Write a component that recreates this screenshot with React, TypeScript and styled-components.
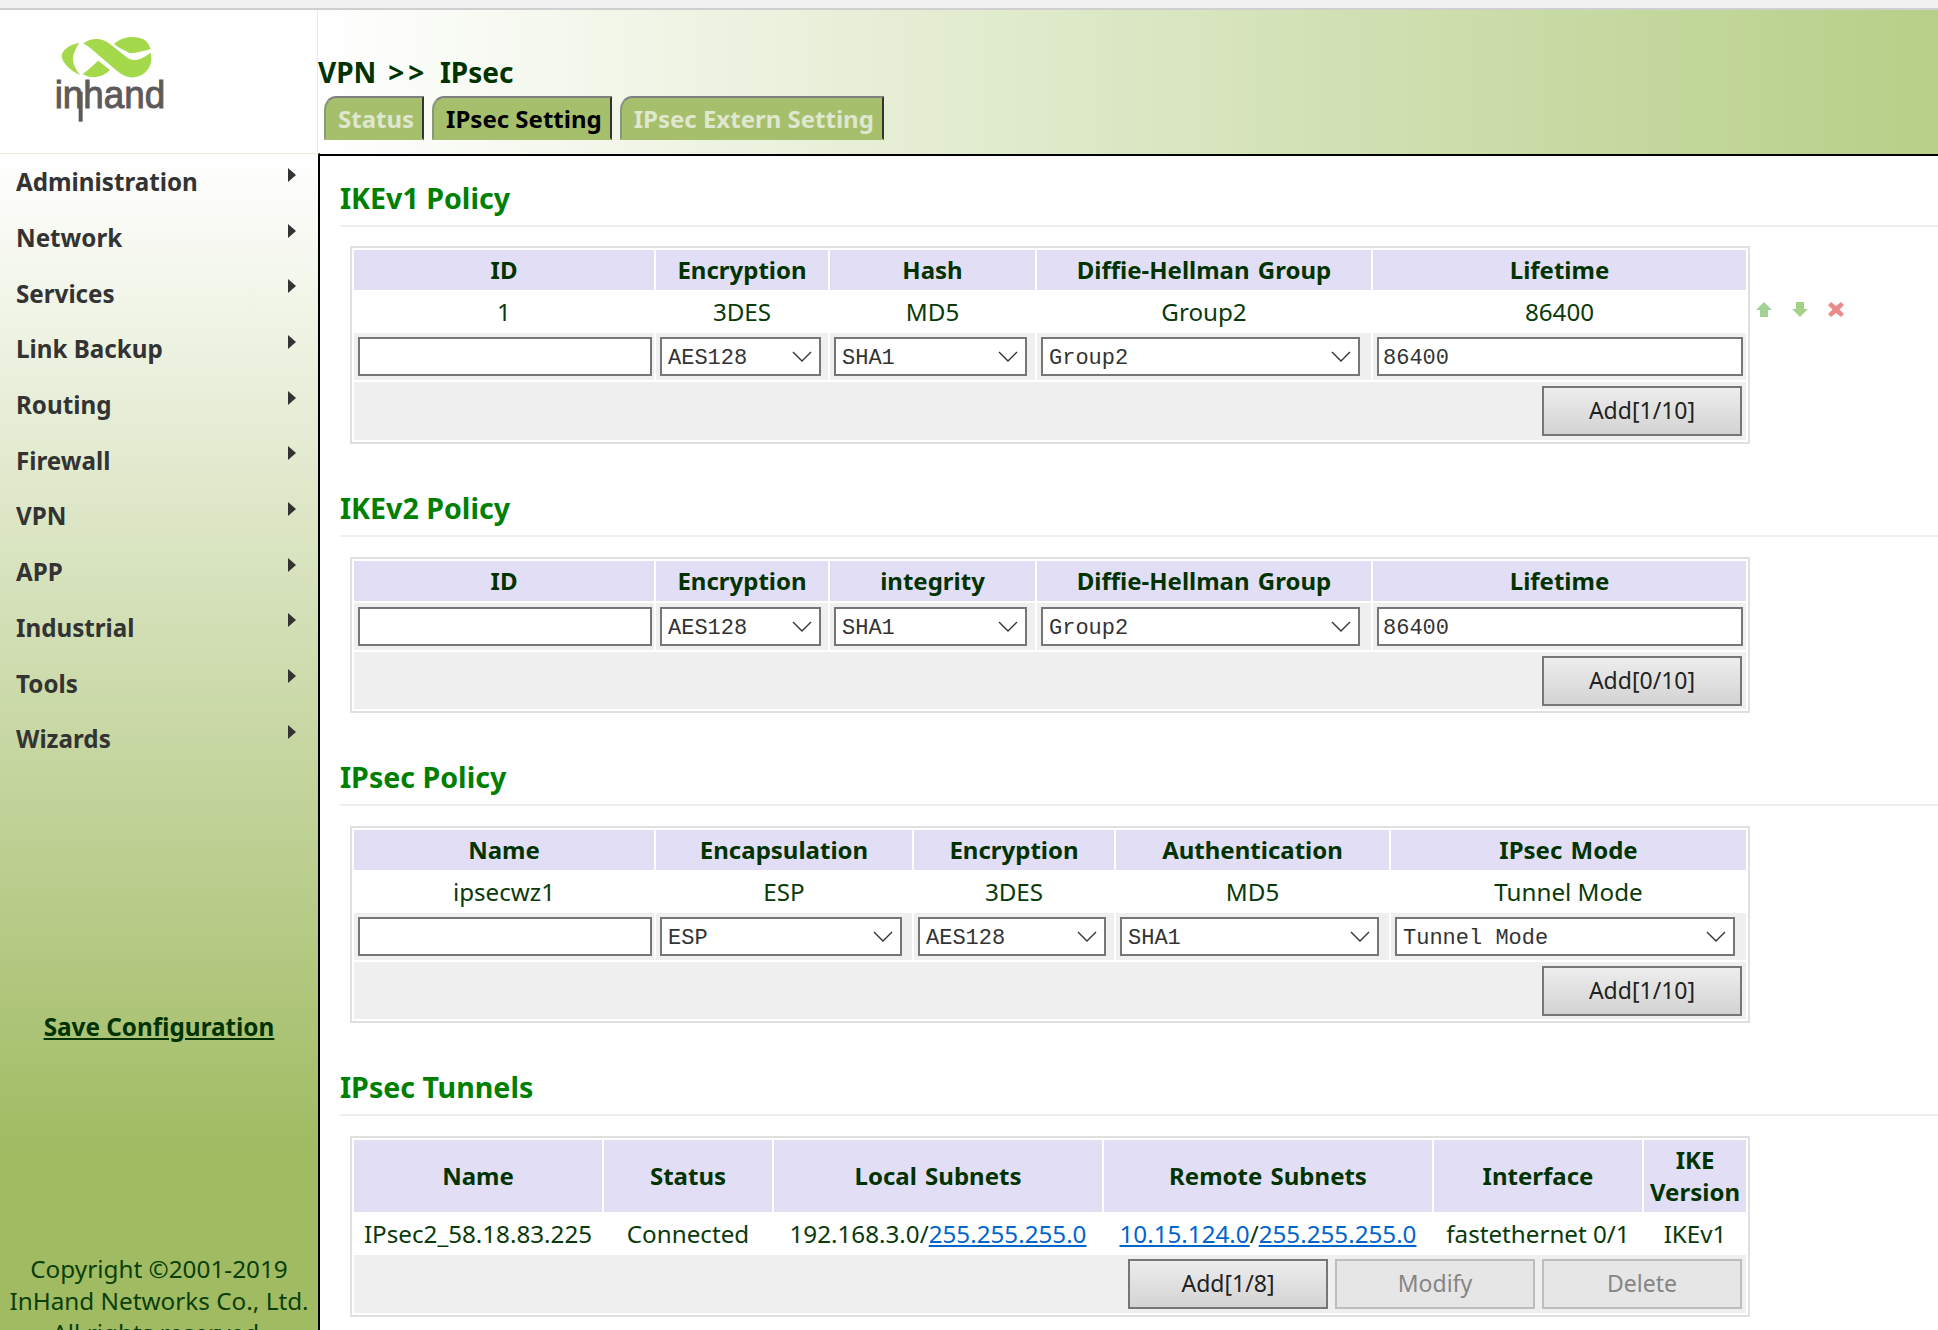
import styled, { createGlobalStyle } from "styled-components";

const GlobalStyle = createGlobalStyle`
    html, body {
        margin: 0;
        padding: 0;
        background: #fff;
        font-family: "Noto Sans", "Open Sans", sans-serif;
    }
`;

const menuItems = [
    "Administration",
    "Network",
    "Services",
    "Link Backup",
    "Routing",
    "Firewall",
    "VPN",
    "APP",
    "Industrial",
    "Tools",
    "Wizards",
];

function Logo() {
    return (
        <svg width="160" height="120" viewBox="0 0 480 360">
            <g fill="#a4d94c">
                <path d="M148 68C110 76 95 95 95 110C98 130 125 155 150 165C135 145 125 125 130 105C135 90 140 80 148 68Z" />
                <path d="M160 70C185 52 215 52 240 72L290 112C310 128 335 118 362 98C368 125 360 150 335 165C305 180 280 170 258 150L205 105C190 90 175 80 160 70Z" />
                <path d="M252 72C275 50 310 45 340 58C352 64 358 76 362 88C340 92 320 100 300 100C285 92 268 85 252 72Z" />
                <path d="M158 162C175 150 190 135 205 122L240 150C220 170 190 180 158 162Z" />
            </g>
            <LogoWord x="74" y="264" textLength="332" lengthAdjust="spacingAndGlyphs">
                inhand
            </LogoWord>
            <path d="M152 215V305" stroke="#5e5a5a" strokeWidth="12" fill="none" />
        </svg>
    );
}

function Chevron() {
    return (
        <ChevronIcon width="20" height="11" viewBox="0 0 20 11">
            <path d="M1 1L10 10L19 1" fill="none" stroke="#333" strokeWidth="1.4" />
        </ChevronIcon>
    );
}

function Picker({ value, width }: { value: string; width: number }) {
    return (
        <PickerWrap $width={width}>
            <PickerSelect defaultValue={value}>
                <option>{value}</option>
            </PickerSelect>
            <Chevron />
        </PickerWrap>
    );
}

function RowActions() {
    return (
        <Actions>
            <svg width="16" height="15" viewBox="0 0 16 15">
                <path d="M8 0L16 8H12V15H4V8H0Z" fill="#a3d196" />
            </svg>
            <svg width="16" height="15" viewBox="0 0 16 15">
                <path d="M8 15L16 7H12V0H4V7H0Z" fill="#a3d186" />
            </svg>
            <svg width="16" height="15" viewBox="0 0 16 15">
                <path d="M3 0L8 4L13 0L16 3L11.5 7.5L16 12L13 15L8 11L3 15L0 12L4.5 7.5L0 3Z" fill="#ec8a8c" />
            </svg>
        </Actions>
    );
}

function Columns({ widths }: { widths: number[] }) {
    return (
        <colgroup>
            {widths.map((w, i) => (
                <col key={i} style={{ width: w }} />
            ))}
        </colgroup>
    );
}

export default function App() {
    return (
        <Page>
            <GlobalStyle />
            <TopStrip />
            <Banner>
                <LogoCell>
                    <Logo />
                </LogoCell>
                <BannerMain>
                    <PageTitle>
                        VPN <Crumb>&gt;&gt;</Crumb> IPsec
                    </PageTitle>
                    <Tabs>
                        <Tab>Status</Tab>
                        <Tab $active>IPsec Setting</Tab>
                        <Tab>IPsec Extern Setting</Tab>
                    </Tabs>
                </BannerMain>
            </Banner>

            <Body>
                <Sidebar>
                    <nav>
                        {menuItems.map((item) => (
                            <MenuRow key={item}>
                                {item}
                                <MenuArrow />
                            </MenuRow>
                        ))}
                    </nav>
                    <SaveLink href="#">Save Configuration</SaveLink>
                    <Copyright>
                        Copyright ©2001-2019
                        <br />
                        InHand Networks Co., Ltd.
                        <br />
                        All rights reserved.
                    </Copyright>
                </Sidebar>

                <Content>
                    <SectionTitle>IKEv1 Policy</SectionTitle>
                    <TableRow>
                        <Table>
                            <Columns widths={[300, 172, 205, 334, 373]} />
                            <thead>
                                <tr>
                                    <HeadCell>ID</HeadCell>
                                    <HeadCell>Encryption</HeadCell>
                                    <HeadCell>Hash</HeadCell>
                                    <HeadCell>Diffie-Hellman Group</HeadCell>
                                    <HeadCell>Lifetime</HeadCell>
                                </tr>
                            </thead>
                            <tbody>
                                <tr>
                                    <Cell>1</Cell>
                                    <Cell>3DES</Cell>
                                    <Cell>MD5</Cell>
                                    <Cell>Group2</Cell>
                                    <Cell>86400</Cell>
                                </tr>
                                <tr>
                                    <InputCell><TextInput $width={294} /></InputCell>
                                    <InputCell><Picker value="AES128" width={161} /></InputCell>
                                    <InputCell><Picker value="SHA1" width={193} /></InputCell>
                                    <InputCell><Picker value="Group2" width={319} /></InputCell>
                                    <InputCell><TextInput $width={366} defaultValue="86400" /></InputCell>
                                </tr>
                                <tr>
                                    <FooterCell colSpan={5}>
                                        <ButtonBar>
                                            <ActionButton>Add[1/10]</ActionButton>
                                        </ButtonBar>
                                    </FooterCell>
                                </tr>
                            </tbody>
                        </Table>
                        <RowActions />
                    </TableRow>

                    <SectionTitle $spaced>IKEv2 Policy</SectionTitle>
                    <TableRow>
                        <Table>
                            <Columns widths={[300, 172, 205, 334, 373]} />
                            <thead>
                                <tr>
                                    <HeadCell>ID</HeadCell>
                                    <HeadCell>Encryption</HeadCell>
                                    <HeadCell>integrity</HeadCell>
                                    <HeadCell>Diffie-Hellman Group</HeadCell>
                                    <HeadCell>Lifetime</HeadCell>
                                </tr>
                            </thead>
                            <tbody>
                                <tr>
                                    <InputCell><TextInput $width={294} /></InputCell>
                                    <InputCell><Picker value="AES128" width={161} /></InputCell>
                                    <InputCell><Picker value="SHA1" width={193} /></InputCell>
                                    <InputCell><Picker value="Group2" width={319} /></InputCell>
                                    <InputCell><TextInput $width={366} defaultValue="86400" /></InputCell>
                                </tr>
                                <tr>
                                    <FooterCell colSpan={5} $short>
                                        <ButtonBar>
                                            <ActionButton>Add[0/10]</ActionButton>
                                        </ButtonBar>
                                    </FooterCell>
                                </tr>
                            </tbody>
                        </Table>
                    </TableRow>

                    <SectionTitle $spaced>IPsec Policy</SectionTitle>
                    <TableRow>
                        <Table>
                            <Columns widths={[300, 256, 200, 273, 355]} />
                            <thead>
                                <tr>
                                    <HeadCell>Name</HeadCell>
                                    <HeadCell>Encapsulation</HeadCell>
                                    <HeadCell>Encryption</HeadCell>
                                    <HeadCell>Authentication</HeadCell>
                                    <HeadCell>IPsec Mode</HeadCell>
                                </tr>
                            </thead>
                            <tbody>
                                <tr>
                                    <Cell>ipsecwz1</Cell>
                                    <Cell>ESP</Cell>
                                    <Cell>3DES</Cell>
                                    <Cell>MD5</Cell>
                                    <Cell>Tunnel Mode</Cell>
                                </tr>
                                <tr>
                                    <InputCell><TextInput $width={294} /></InputCell>
                                    <InputCell><Picker value="ESP" width={242} /></InputCell>
                                    <InputCell><Picker value="AES128" width={188} /></InputCell>
                                    <InputCell><Picker value="SHA1" width={259} /></InputCell>
                                    <InputCell><Picker value="Tunnel Mode" width={340} /></InputCell>
                                </tr>
                                <tr>
                                    <FooterCell colSpan={5} $short>
                                        <ButtonBar>
                                            <ActionButton>Add[1/10]</ActionButton>
                                        </ButtonBar>
                                    </FooterCell>
                                </tr>
                            </tbody>
                        </Table>
                    </TableRow>

                    <SectionTitle $spaced>IPsec Tunnels</SectionTitle>
                    <TableRow>
                        <Table>
                            <Columns widths={[248, 168, 328, 328, 208, 102]} />
                            <thead>
                                <tr>
                                    <HeadCell $tall>Name</HeadCell>
                                    <HeadCell $tall>Status</HeadCell>
                                    <HeadCell $tall>Local Subnets</HeadCell>
                                    <HeadCell $tall>Remote Subnets</HeadCell>
                                    <HeadCell $tall>Interface</HeadCell>
                                    <HeadCell $tall>IKE Version</HeadCell>
                                </tr>
                            </thead>
                            <tbody>
                                <tr>
                                    <Cell>IPsec2_58.18.83.225</Cell>
                                    <Cell>Connected</Cell>
                                    <Cell>
                                        192.168.3.0/<SubnetLink href="#">255.255.255.0</SubnetLink>
                                    </Cell>
                                    <Cell>
                                        <SubnetLink href="#">10.15.124.0</SubnetLink>/
                                        <SubnetLink href="#">255.255.255.0</SubnetLink>
                                    </Cell>
                                    <Cell>fastethernet 0/1</Cell>
                                    <Cell>IKEv1</Cell>
                                </tr>
                                <tr>
                                    <FooterCell colSpan={6}>
                                        <ButtonBar>
                                            <ActionButton>Add[1/8]</ActionButton>
                                            <ActionButton disabled>Modify</ActionButton>
                                            <ActionButton disabled>Delete</ActionButton>
                                        </ButtonBar>
                                    </FooterCell>
                                </tr>
                            </tbody>
                        </Table>
                    </TableRow>
                </Content>
            </Body>
        </Page>
    );
}

const Page = styled.div`
    width: 1938px;
    height: 1330px;
    overflow: hidden;
    display: flex;
    flex-direction: column;
    font-size: 24px;
    color: #0a3a0a;
`;

const TopStrip = styled.div`
    height: 8px;
    flex: none;
    background: #f1f1f1;
    border-bottom: 2px solid #cfcfcf;
`;

const Banner = styled.header`
    display: flex;
    height: 144px;
    flex: none;
`;

const LogoCell = styled.div`
    width: 318px;
    flex: none;
    box-sizing: border-box;
    padding: 10px 0 0 30px;
    background: #fff;
    border-right: 1px solid #e9eddc;
`;

const LogoWord = styled.text`
    font-family: "Liberation Sans", sans-serif;
    font-size: 118px;
    fill: #5e5a5a;
    stroke: #5e5a5a;
    stroke-width: 3px;
`;

const BannerMain = styled.div`
    flex: 1;
    padding-top: 45px;
    background: linear-gradient(90deg, #fff 0%, #b7cf88 100%);
`;

const PageTitle = styled.h1`
    margin: 0;
    font-size: 28px;
    line-height: 34px;
    font-weight: 700;
    word-spacing: 4.5px;
    color: #003300;
`;

const Crumb = styled.span`
    letter-spacing: 4px;
`;

const Tabs = styled.div`
    display: flex;
    gap: 8px;
    margin: 7px 0 0 6px;
`;

const Tab = styled.div<{ $active?: boolean }>`
    height: 44px;
    box-sizing: border-box;
    padding: 0 8px 0 12px;
    display: flex;
    align-items: center;
    background: #a6bf6c;
    border-style: solid;
    border-width: 2px;
    border-color: #808080 #333 #a6bf6c #8a9a78;
    border-top-left-radius: 12px 14px;
    font-size: 24px;
    font-weight: 700;
    color: ${(p) => (p.$active ? "#000" : "#dfe7cf")};
`;

const Body = styled.div`
    flex: 1;
    display: flex;
    min-height: 0;
`;

const Sidebar = styled.aside`
    width: 318px;
    flex: none;
    border-right: 2px solid #000;
    background: linear-gradient(180deg, #fff 0%, #a0bb62 85%, #a0bb62 100%);
    border-top: 1px solid #e9eddc;
    margin-top: -1px;
`;

const MenuRow = styled.div`
    height: 55.7px;
    box-sizing: border-box;
    padding: 0 22px 0 16px;
    display: flex;
    align-items: center;
    justify-content: space-between;
    font-size: 24.2px;
    font-weight: 700;
    color: #333;
`;

const MenuArrow = styled.span`
    width: 0;
    height: 0;
    margin-bottom: 14px;
    border-style: solid;
    border-width: 7px 0 7px 8px;
    border-color: transparent transparent transparent #333;
`;

const SaveLink = styled.a`
    display: block;
    margin-top: 243px;
    font-size: 24.3px;
    line-height: 34px;
    font-weight: 700;
    text-align: center;
    color: #003300;
    text-decoration: underline;
`;

const Copyright = styled.div`
    margin-top: 209px;
    font-size: 24.3px;
    line-height: 32px;
    text-align: center;
    color: #0a3f0a;
`;

const Content = styled.main`
    flex: 1;
    min-width: 0;
    box-sizing: border-box;
    padding: 24px 0 0 20px;
    border-top: 2px solid #000;
    background: #fff;
`;

const SectionTitle = styled.h2<{ $spaced?: boolean }>`
    margin: ${(p) => (p.$spaced ? "46px 0 20px" : "0 0 19px")};
    padding-bottom: 9px;
    font-size: 28.6px;
    line-height: 36px;
    font-weight: 700;
    color: #008000;
    border-bottom: 2px solid #eee;
`;

const TableRow = styled.div`
    display: flex;
    align-items: flex-start;
    margin-left: 10px;
`;

const Table = styled.table`
    width: 1400px;
    flex: none;
    box-sizing: border-box;
    table-layout: fixed;
    border: 2px solid #e0e0e0;
    border-collapse: separate;
    border-spacing: 2px;
`;

const HeadCell = styled.th<{ $tall?: boolean }>`
    height: ${(p) => (p.$tall ? "72px" : "40px")};
    padding: 0;
    background: #e2def5;
    font-size: 24px;
    line-height: 32px;
    font-weight: 700;
    word-spacing: 2px;
    text-align: center;
    color: #003300;
`;

const Cell = styled.td`
    height: 39px;
    padding: 0;
    font-size: 24.2px;
    text-align: center;
    white-space: nowrap;
    line-height: 32px;
`;

const InputCell = styled.td`
    height: 47px;
    padding: 0 0 0 4px;
    background: #efefef;
`;

const FooterCell = styled.td<{ $short?: boolean }>`
    height: ${(p) => (p.$short ? "57px" : "58px")};
    padding: 0 4px 0 0;
    background: #efefef;
`;

const ButtonBar = styled.div`
    display: flex;
    justify-content: flex-end;
    gap: 7px;
`;

const ActionButton = styled.button`
    width: 200px;
    height: 50px;
    box-sizing: border-box;
    padding: 0 0 2px;
    border: 2px solid #767676;
    border-radius: 0;
    background: linear-gradient(180deg, #ededed 0%, #d3d3d3 100%);
    font-family: inherit;
    font-size: 23px;
    color: #222;

    &:disabled {
        border-color: #bdbdbd;
        background: #e6e6e6;
        color: #858585;
    }
`;

const TextInput = styled.input<{ $width: number }>`
    display: block;
    width: ${(p) => p.$width}px;
    height: 39px;
    box-sizing: border-box;
    padding: 3px 4px 0;
    border: 2px solid #767676;
    border-radius: 0;
    background: #fff;
    font-family: "Liberation Mono", monospace;
    font-size: 22px;
    color: #333;
    outline: none;
`;

const PickerWrap = styled.div<{ $width: number }>`
    position: relative;
    width: ${(p) => p.$width}px;
    height: 39px;
`;

const PickerSelect = styled.select`
    display: block;
    width: 100%;
    height: 100%;
    box-sizing: border-box;
    padding: 3px 6px 0;
    appearance: none;
    border: 2px solid #767676;
    border-radius: 0;
    background: #fff;
    font-family: "Liberation Mono", monospace;
    font-size: 22px;
    color: #333;
`;

const ChevronIcon = styled.svg`
    position: absolute;
    top: 14px;
    right: 9px;
    pointer-events: none;
`;

const SubnetLink = styled.a`
    color: #0066cc;
    text-decoration: underline;
`;

const Actions = styled.div`
    display: flex;
    gap: 20px;
    margin: 56px 0 0 6px;
`;
